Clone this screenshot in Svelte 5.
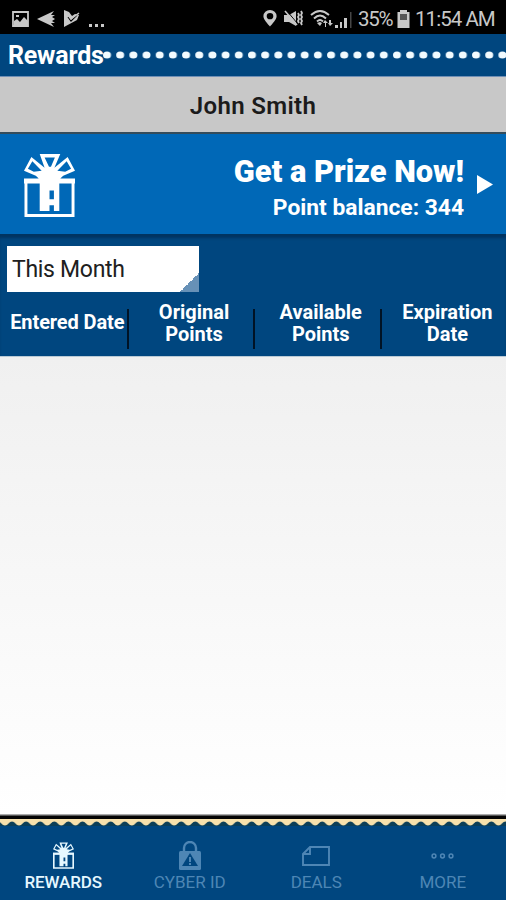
<script lang="ts">
let period = $state("This Month");
let active = $state("rewards");

const columns = [
  ["Entered Date"],
  ["Original", "Points"],
  ["Available", "Points"],
  ["Expiration", "Date"],
];

const tabs = [
  { id: "rewards", label: "REWARDS" },
  { id: "cyber", label: "CYBER ID" },
  { id: "deals", label: "DEALS" },
  { id: "more", label: "MORE" },
];
</script>

{#snippet gift()}
  <svg class="gift" viewBox="0 0 52 66" preserveAspectRatio="none" fill="none" stroke="currentColor" stroke-width="3">
    <path d="M2 28.500h48v35H2Z" />
    <path fill="currentColor" stroke="none" fill-rule="evenodd" d="M0 18 7.500 4 21 15 16 1H37L31 15 44.500 4 52 18 40 23 37 26H52V31H36V59H30.500V53H26V59H16V31H0V26H15L12 23ZM4 16 8.500 8.500 18 18 10 19ZM48 16 43.500 8.500 34 18 42 19ZM21 4.500H31.500L27.500 14H25.500ZM26 38V47H30.500V38Z" />
  </svg>
{/snippet}

<div class="screen">
  <div class="status">
    <div class="notices">
      <svg width="17" height="16" viewBox="0 0 17 16" fill="none" stroke="currentColor" stroke-width="1.8">
        <path d="M1 1h15v14H1Z" />
        <path fill="currentColor" stroke="none" d="M2 14v-4l3-2 3 3 4-5 4 4v4ZM4 4h3v2H4Z" />
      </svg>
      <svg width="19" height="18" viewBox="0 0 19 18" fill="currentColor">
        <path d="M0 9 17 1l-3 4h4l-3 2 3 2-3 2 3 2h-4l3 4Z" />
      </svg>
      <svg width="16" height="17" viewBox="0 0 16 17">
        <path fill="currentColor" d="M0 0 5 2 8 6 11 4 15 5 13 10 0 17Z" />
        <path fill="none" stroke="#000" stroke-width="1.2" d="m4 7 3 4 6-6" />
        <path fill="none" stroke="currentColor" stroke-width="1.500" d="m4 5 3 4 8-6" />
      </svg>
      <svg class="ellipsis" width="15" height="3" viewBox="0 0 15 3" fill="currentColor">
        <path d="M0 0h3v3H0ZM6 0h3v3H6ZM12 0h3v3h-3Z" />
      </svg>
    </div>
    <div class="system">
      <svg width="14" height="17" viewBox="0 0 14 18" preserveAspectRatio="none" fill="currentColor" fill-rule="evenodd">
        <path d="M7 0a6.600 6.600 0 0 1 6.600 6.600C13.600 10 9 15 7 17.500 5 15 .4 10 .4 6.600A6.600 6.600 0 0 1 7 0ZM7 3.200a3.300 3.300 0 1 0 0 6.600 3.300 3.300 0 0 0 0-6.600Z" />
      </svg>
      <svg class="mute" width="19" height="17" viewBox="0 0 19 17" fill="currentColor">
        <path d="M0 5h5l7-4v15l-7-4H0Z" />
        <path fill="none" stroke="#000" d="m3 1 10 12" />
        <path fill="none" stroke="currentColor" stroke-width="1.600" d="m1 1 12 14" />
        <path fill="none" stroke="currentColor" stroke-width="1.800" d="m14 3 1 2-1 2 1 2-1 2 1 2M17 1l1 2-1 2 1 2-1 2 1 2-1 2 1 2" />
      </svg>
      <svg class="wifi" width="23" height="18" viewBox="0 0 23 18" fill="none" stroke="currentColor" stroke-width="1.900">
        <path d="M1 5q9-8 18 0M4 8.500q6-6 12 0M7 11.500q3-3 6 0" />
        <path fill="currentColor" stroke="none" d="m7 13 3-1 2 1-2 3ZM15 10l3 3h-2v4h-1v-4h-2ZM20 16l-2-3h1v-3h2v3h2Z" />
      </svg>
      <svg class="signal" width="17" height="16" viewBox="0 0 17 16" fill="currentColor">
        <path d="M0 13h3v3H0ZM5 10h2v6H5ZM9 6h3v10H9Z" />
        <path opacity=".35" d="M15 0h1.500v16H15Z" />
      </svg>
      <span class="percent">35%</span>
      <svg class="battery" width="13" height="18" viewBox="0 0 13 18" fill="currentColor">
        <path d="M3 0h7v2h2.500v16H.5V2H3Z" />
        <path fill="#555" d="M3 4h7v6H3Z" />
      </svg>
      <span class="clock">11:54 AM</span>
    </div>
  </div>

  <header>
    <h1>Rewards</h1>
    <svg class="dots" width="403" height="10" viewBox="0 0 403 10">
      <defs>
        <pattern id="dot" width="13.18" height="10" patternUnits="userSpaceOnUse">
          <ellipse cx="4" cy="5" rx="4" ry="3.500" fill="#f2fbff" />
        </pattern>
      </defs>
      <rect width="403" height="10" fill="url(#dot)" />
    </svg>
  </header>

  <div class="member">John Smith</div>

  <button class="prize">
    {@render gift()}
    <span class="prize-text">
      <strong>Get a Prize Now!</strong>
      <span>Point balance: 344</span>
    </span>
    <svg class="arrow" width="16" height="19" viewBox="0 0 16 19"><path fill="#fff" d="M0 0 16 9.500 0 19Z" /></svg>
  </button>

  <section class="filters">
    <button class="period"><span>{period}</span></button>
    <div class="columns">
      {#each columns as lines}
        <div class="column">
          {#each lines as line}<span>{line}</span>{/each}
        </div>
      {/each}
    </div>
  </section>

  <main></main>

  <svg class="trim" width="506" height="12" viewBox="0 0 506 12">
    <defs>
      <pattern id="scallop" x="5" width="14.1" height="12" patternUnits="userSpaceOnUse">
        <path fill="#0c3f58" d="M0 11.500Q2 11.500 3.500 9.500T7 7.500 10.500 9.500 14.100 11.500V12H0Z" />
      </pattern>
    </defs>
    <rect width="506" height="12" fill="#f8e1ac" />
    <rect width="506" height="2" fill="#aaa" />
    <rect y="1.500" width="506" height="3.500" fill="#050505" />
    <rect width="506" height="12" fill="url(#scallop)" />
  </svg>

  <nav>
    {#each tabs as tab}
      <button class="tab" class:active={active === tab.id} onclick={() => active = tab.id}>
        <span class="icon">
          {#if tab.id === "rewards"}
            {@render gift()}
          {:else if tab.id === "cyber"}
            <svg width="22" height="29" viewBox="0 0 22 29">
              <path fill="none" stroke="currentColor" stroke-width="2.400" d="M5 11V7a6 6 0 0 1 12 0v4" />
              <rect y="10" width="22" height="19" rx="1.500" fill="currentColor" />
              <path fill="#00467f" d="m11 12 8 13H3Z" />
              <path fill="currentColor" d="M10 16h2v5h-2ZM10 22h2v2h-2Z" />
            </svg>
          {:else if tab.id === "deals"}
            <svg class="deals" width="28" height="20" viewBox="0 0 28 20" fill="none" stroke="currentColor" stroke-width="1.900">
              <path d="M8 1h19v18H1V8ZM8 1v7H1" />
            </svg>
          {:else}
            <svg class="more" width="23" height="6" viewBox="0 0 23 6" fill="none" stroke="currentColor" stroke-width="1.500">
              <circle cx="3" cy="3" r="1.900" />
              <circle cx="11.500" cy="3" r="1.900" />
              <circle cx="20" cy="3" r="1.900" />
            </svg>
          {/if}
        </span>
        <span class="label">{tab.label}</span>
      </button>
    {/each}
  </nav>
</div>

<style>
  :global(body) {
    margin: 0;
    background: #000;
  }

  .screen {
    display: flex;
    flex-direction: column;
    width: 506px;
    height: 900px;
    overflow: hidden;
    font-family: Roboto, sans-serif;
    color: #fff;
  }

  svg {
    display: block;
    flex: none;
  }

  button {
    border: 0;
    padding: 0;
    font: inherit;
    color: inherit;
    cursor: pointer;
  }

  .status {
    display: flex;
    justify-content: space-between;
    box-sizing: border-box;
    height: 34px;
    padding: 3px 12px 0;
    background: #000;
    color: #c8c8c8;
  }

  .notices,
  .system {
    display: flex;
    align-items: center;
  }

  .notices {
    gap: 8px;
  }

  .ellipsis {
    margin: 13px 0 0 1px;
  }

  .mute {
    margin-left: 7px;
  }

  .wifi {
    margin-left: 7px;
  }

  .signal {
    margin: 2px 0 0 2px;
  }

  .percent,
  .clock {
    font-size: 20.500px;
    line-height: 30px;
    white-space: nowrap;
  }

  .percent {
    width: 34px;
    margin-left: 6px;
    letter-spacing: -1.3px;
  }

  .battery {
    margin: 0 5px;
  }

  .clock {
    width: 79px;
    letter-spacing: -0.950px;
  }

  header {
    display: flex;
    align-items: center;
    box-sizing: border-box;
    height: 42px;
    padding-left: 8px;
    background: #00467f;
  }

  h1 {
    width: 95px;
    margin: 0;
    padding-top: 2px;
    font-size: 25px;
    font-weight: 700;
    letter-spacing: -0.2px;
    line-height: 42px;
  }

  .member {
    box-sizing: border-box;
    height: 58px;
    border-top: 1px solid #6f8fb6;
    border-bottom: 2px solid #344c5b;
    background: #c8c8c8;
    color: #1b1b1b;
    font-size: 24px;
    font-weight: 600;
    letter-spacing: 0.35px;
    line-height: 58px;
    text-align: center;
  }

  .prize {
    display: flex;
    align-items: center;
    box-sizing: border-box;
    height: 102px;
    padding: 0 13px 0 24px;
    border-bottom: 2px solid #003461;
    background: #0068b7;
    text-align: right;
  }

  .prize .gift {
    width: 51px;
    height: 65px;
    margin-top: 2px;
  }

  .prize-text {
    display: flex;
    flex: 1;
    flex-direction: column;
    margin-right: 13px;
    padding-top: 9px;
    font-size: 22.8px;
    font-weight: 700;
    line-height: 34px;
    white-space: nowrap;
  }

  .prize-text strong {
    font-size: 30.800px;
    line-height: 38px;
  }

  .filters {
    box-sizing: border-box;
    height: 120px;
    padding-top: 10px;
    background: #00467f;
    box-shadow: inset 0 3px 3px -1px #003461;
  }

  .period {
    display: block;
    width: 192px;
    height: 46px;
    margin-left: 7px;
    padding-left: 5px;
    background: linear-gradient(135deg, transparent 50%, #6791b7 50%) right bottom / 19px 19px no-repeat #fff;
    color: #202020;
    font-size: 23px;
    letter-spacing: -0.3px;
    text-align: left;
  }

  .columns {
    display: grid;
    grid-template-columns: repeat(4, 126.7px);
    margin-top: 9px;
  }

  .column {
    position: relative;
    display: flex;
    flex-direction: column;
    justify-content: center;
    height: 44px;
    padding-left: 8px;
    font-size: 20px;
    font-weight: 700;
    line-height: 22px;
    text-align: center;
    white-space: nowrap;
  }

  .column:first-child {
    padding-bottom: 2px;
    height: 42px;
    letter-spacing: -0.1px;
  }

  .column:not(:last-child)::after {
    content: "";
    position: absolute;
    top: 8px;
    right: -2px;
    width: 2px;
    height: 40px;
    background: #001326;
  }

  main {
    flex: 1;
    border-top: 1px solid #b9cad6;
    background: linear-gradient(#f0f0f0, #fff);
  }

  nav {
    display: grid;
    grid-template-columns: repeat(4, 1fr);
    height: 74px;
    background: #00467f;
  }

  .tab {
    display: flex;
    flex-direction: column;
    align-items: center;
    background: none;
    color: #4e86b5;
  }

  .tab.active {
    color: #e6f8ff;
  }

  .icon {
    display: flex;
    align-items: center;
    height: 29px;
    margin-top: 15px;
  }

  .icon .gift {
    width: 21px;
    height: 27px;
    stroke-width: 4;
  }

  .label {
    font-size: 17px;
    line-height: 24px;
  }

  .active .label {
    font-weight: 500;
    letter-spacing: -0.1px;
  }
</style>
